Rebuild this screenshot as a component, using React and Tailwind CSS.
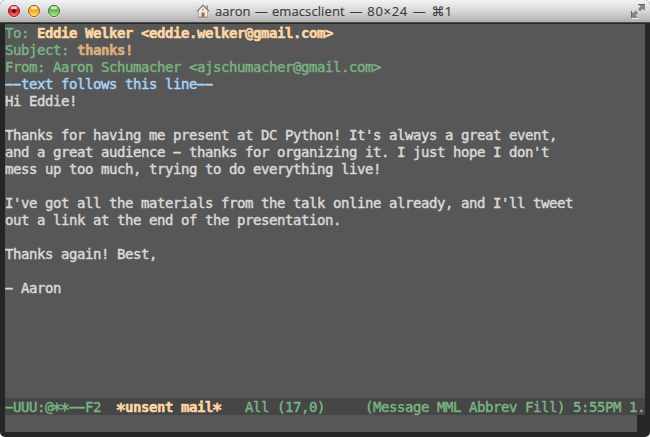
import React from "react";

// Wide hyphen filling one eight-pixel terminal cell.
function Dash() {
  return (
    <span className="inline-block w-[8px] text-left">
      <span className="ml-[-3.8px] inline-block w-[4.21px] origin-left scale-x-[1.9] tracking-[-4.22px]">-</span>
    </span>
  );
}

// Two wide hyphens on the eight-pixel grid, almost joined.
function DoubleDash() {
  return (
    <span className="inline-block w-[16px] text-left">
      <span className="ml-[-3.8px] inline-block w-[8.42px] origin-left scale-x-[1.9] tracking-[-4.22px]">--</span>
    </span>
  );
}

// Asterisks centred on the lowercase letters.
function Star() {
  return (
    <span className="relative top-[4px] ml-[-1.2px] mr-[1.2px] text-[17px] leading-[0] tracking-[-2.235px]">*</span>
  );
}

function DoubleStar() {
  return (
    <span className="relative top-[4px] ml-[-1.2px] mr-[1.2px] text-[17px] leading-[0] tracking-[-2.235px]">**</span>
  );
}

function Row({ className = "", children }) {
  return <div className={`h-[17px] whitespace-pre pt-px ${className}`}>{children}</div>;
}

function TrafficLight({ id, top, mid, low, ring, dot }) {
  return (
    <svg width="14" height="14" viewBox="0 0 14 14">
      <defs>
        <linearGradient id={id} x1="0" y1="0" x2="0" y2="1">
          <stop offset="0" stopColor={top} />
          <stop offset="0.45" stopColor={mid} />
          <stop offset="1" stopColor={low} />
        </linearGradient>
      </defs>
      <circle cx="7" cy="7.6" r="6.200" fill="#f4f4f4" />
      <circle cx="7" cy="7" r="5.6" fill={`url(#${id})`} stroke={ring} strokeWidth="1" />
      <ellipse cx="7" cy="3.7" rx="3" ry="1.5" fill="#fff" opacity="0.65" />
      {dot && <circle cx="7" cy="7" r="1.9" fill="#6d0508" />}
    </svg>
  );
}

function House() {
  return (
    <svg width="14" height="14" viewBox="0 0 14 14">
      <path d="M10.500 1.500h1.500v4.500l-1.500-1.500z" fill="#a5857a" />
      <path d="M2.500 6.500L7 2l4.500 4.500V13h-9z" fill="#eee9e2" stroke="#a39f9b" strokeWidth="0.8" />
      <path d="M0.600 7.500L7 1l6.400 6.500" fill="none" stroke="#8b8581" strokeWidth="1.100" />
      <rect x="5.500" y="8.500" width="3" height="4.500" fill="#c0583a" />
      <rect x="6.200" y="4.800" width="1.600" height="1.700" fill="#999" />
      <path d="M1.500 13.300h11" stroke="#8f9488" strokeWidth="0.800" />
    </svg>
  );
}

function FullScreen() {
  return (
    <svg width="15" height="16" viewBox="0 0 15 16">
      <path d="M1 14.500h6.500M8 8.700l2-1.700M13.500 8h1" stroke="#f3f3f3" strokeWidth="1" fill="none" />
      <path d="M7 0h7v7l-2.200-2.200-2.600 2.600L7 5.200l2.400-2.600z" fill="#858585" />
      <path d="M0 7l2.200 2.200 2.600-2.600L7 8.800l-2.400 2.600L7 14H0z" fill="#858585" />
      <path d="M7 0.500h7M0.500 7v6.500" stroke="#666" strokeWidth="1" />
    </svg>
  );
}

export default function App() {
  return (
    <div className="h-[437px] w-[650px] overflow-hidden bg-white">
      <div className="flex h-full flex-col overflow-hidden rounded-[5px] bg-[#262626]">
        <header className="grid h-[24px] shrink-0 grid-cols-[196px_1fr_19px] border-b border-b-[#252525] bg-linear-to-b from-[#f3f3f3] via-[#d6d6d6] to-[#acacac] shadow-[inset_0_-1px_0_#4b4b4b]">
          <div className="flex gap-[6px] pl-[7px] pt-[4px]">
            <TrafficLight id="close" top="#e99090" mid="#d9232c" low="#ff7b7b" ring="#8d2a2c" dot />
            <TrafficLight id="minimise" top="#e8b25d" mid="#f3a925" low="#ffe678" ring="#9a6423" />
            <TrafficLight id="zoom" top="#8cc77b" mid="#63b956" low="#b5f191" ring="#45763a" />
          </div>
          <div className="flex gap-[5px] pt-[4px]">
            <House />
            <h1 className="whitespace-nowrap font-['Open_Sans','DejaVu_Sans',sans-serif] text-[13px] leading-[15px] text-[#3b3b3b] [-webkit-text-stroke:0.15px_#3b3b3b]">
              aaron <span className="mx-[0.8px]">—</span> <span className="tracking-[0.1px]">emacsclient</span>{" "}
              <span className="mx-[1.4px]">—</span> <span className="tracking-[0.7px]">80×24</span>{" "}
              <span className="mx-[1.3px]">—</span> <span className="ml-[1px] tracking-[0.4px]">⌘1</span>
            </h1>
          </div>
          <div className="pt-[4px]">
            <FullScreen />
          </div>
        </header>
        <main className="mx-[5px] flex h-[408px] flex-col bg-[#575757] font-['DejaVu_Sans_Mono',monospace] text-[14px] leading-[17px] tracking-[-0.428px] text-[#d9d9d9] [-webkit-text-stroke:0.45px_currentColor]">
          <Row className="text-[#78b482]">
            To: <b className="text-[#ffd7a5]">Eddie Welker &lt;eddie.welker@gmail.com&gt;</b>
          </Row>
          <Row className="text-[#78b482]">
            Subject: <b className="text-[#dfaf80]">thanks!</b>
          </Row>
          <Row className="text-[#78b482]">From: Aaron Schumacher &lt;ajschumacher@gmail.com&gt;</Row>
          <Row className="text-[#a5d5fa]">
            <DoubleDash />text follows this line<DoubleDash />
          </Row>
          <Row>Hi Eddie!</Row>
          <Row />
          <Row>Thanks for having me present at DC Python! It's always a great event,</Row>
          <Row>and a great audience <Dash /> thanks for organizing it. I just hope I don't</Row>
          <Row>mess up too much, trying to do everything live!</Row>
          <Row />
          <Row>I've got all the materials from the talk online already, and I'll tweet</Row>
          <Row>out a link at the end of the presentation.</Row>
          <Row />
          <Row>Thanks again! Best,</Row>
          <Row />
          <Row><Dash /> Aaron</Row>
          <Row className="mt-auto bg-[#464646] text-[#78b482]">
            <Dash />UUU:@<DoubleStar /><DoubleDash />F2{"  "}
            <b className="text-[#ffd7a5]"><Star />unsent mail<Star /></b>
            {"   All (17,0)     (Message MML Abbrev Fill) 5:55PM 1."}
          </Row>
          <div className="flex h-[17px] justify-end">
            <div className="w-[8px] bg-[#262626]" />
          </div>
        </main>
      </div>
    </div>
  );
}
